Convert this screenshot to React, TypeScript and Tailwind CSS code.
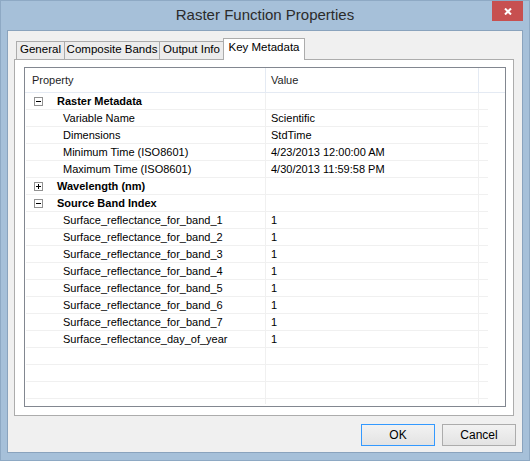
import type { ReactNode } from "react";

type Row =
  | { kind: "group"; label: string; open: boolean }
  | { kind: "item"; label: string; value: string }
  | { kind: "empty" };

const rows: Row[] = [
  { kind: "group", label: "Raster Metadata", open: true },
  { kind: "item", label: "Variable Name", value: "Scientific" },
  { kind: "item", label: "Dimensions", value: "StdTime" },
  { kind: "item", label: "Minimum Time (ISO8601)", value: "4/23/2013 12:00:00 AM" },
  { kind: "item", label: "Maximum Time (ISO8601)", value: "4/30/2013 11:59:58 PM" },
  { kind: "group", label: "Wavelength (nm)", open: false },
  { kind: "group", label: "Source Band Index", open: true },
  { kind: "item", label: "Surface_reflectance_for_band_1", value: "1" },
  { kind: "item", label: "Surface_reflectance_for_band_2", value: "1" },
  { kind: "item", label: "Surface_reflectance_for_band_3", value: "1" },
  { kind: "item", label: "Surface_reflectance_for_band_4", value: "1" },
  { kind: "item", label: "Surface_reflectance_for_band_5", value: "1" },
  { kind: "item", label: "Surface_reflectance_for_band_6", value: "1" },
  { kind: "item", label: "Surface_reflectance_for_band_7", value: "1" },
  { kind: "item", label: "Surface_reflectance_day_of_year", value: "1" },
  { kind: "empty" },
  { kind: "empty" },
  { kind: "empty" },
];

const tabs = [
  { label: "General", w: "w-[48px]" },
  { label: "Composite Bands", w: "w-[95px]" },
  { label: "Output Info", w: "w-[64px]" },
];

function Expander(props: { open: boolean }) {
  return (
    <svg width="9" height="9" viewBox="0 0 9 9" className="shrink-0">
      <rect x="0.5" y="0.5" width="8" height="8" fill="#fff" stroke="#919191" />
      <path d="M2 4.5h5" stroke="#000" />
      {!props.open ? <path d="M4.5 2v5" stroke="#000" /> : null}
    </svg>
  );
}

function GridRow(props: { children?: ReactNode; value?: string; h?: string }) {
  return (
    <div className={`flex ${props.h ?? "h-[17px] border-b border-[#f0f0f0]"}`}>
      <div className="flex w-[240px] items-center border-r border-[#f0f0f0]">
        {props.children}
      </div>
      <div className="flex w-[213px] items-center border-r border-[#f0f0f0] pl-[5px]">
        {props.value}
      </div>
      <div className="w-[9px]" />
    </div>
  );
}

function Button(props: { label: string; primary?: boolean }) {
  return (
    <button
      type="button"
      className={`flex h-[22px] w-[74px] items-center justify-center border bg-gradient-to-b from-[#f2f2f2] to-[#e3e3e3] text-[12px] text-black ${
        props.primary ? "border-[#3399ff]" : "border-[#acacac]"
      }`}
    >
      {props.label}
    </button>
  );
}

export default function App() {
  return (
    <div className="flex h-[461px] w-[530px] flex-col border border-[#8ea9c4] bg-[#a6c0d9] font-['Liberation_Sans',Arial,sans-serif]">
      {/* title bar */}
      <div className="relative flex h-[29px] shrink-0 items-center justify-center">
        <span className="text-[15px] text-[#2b2b2b]">Raster Function Properties</span>
        <div className="absolute top-0 right-[6px] flex h-[20px] w-[31px] items-center justify-center bg-[#c75050]">
          <svg width="8" height="7" viewBox="0 0 8 7">
            <path d="M1 0.5l6 6M7 0.5l-6 6" stroke="#fff" strokeWidth="2" />
          </svg>
        </div>
      </div>

      {/* dialog body */}
      <div className="mx-[6px] mb-[7px] flex flex-1 flex-col border border-[#8aa3bd] bg-[#f0f0f0] pt-[7px]">
        <div className="ml-[6px] mr-[8px] flex flex-col">
          <div className="flex h-[21px] items-end pl-[2px] text-[11.5px] whitespace-nowrap">
            {tabs.map((t) => (
              <div
                key={t.label}
                className={`flex h-[18px] ${t.w} items-center justify-center border border-b-0 border-r-0 border-[#acacac] bg-[#ececec] pb-[1px] text-black`}
              >
                {t.label}
              </div>
            ))}
            <div className="relative z-10 -mb-[1px] flex h-[22px] w-[82px] items-center justify-center border border-b-0 border-[#acacac] bg-white pb-[3px] text-black">
              Key Metadata
            </div>
          </div>

          <div className="flex h-[357px] flex-col border border-[#acacac] bg-white pt-[7px] pr-[7px] pb-[8px] pl-[9px]">
            <div className="flex h-[340px] flex-col overflow-hidden border border-[#828790] text-[11px] text-black">
              <div className="flex h-[25px] shrink-0 border-b border-[#e4eaf3]">
                <div className="flex w-[241px] items-center border-r border-[#e4eaf3] pl-[7px] text-[#1e1e1e]">
                  Property
                </div>
                <div className="flex w-[213px] items-center border-r border-[#e4eaf3] pl-[5px] text-[#1e1e1e]">
                  Value
                </div>
                <div className="flex-1" />
              </div>
              <div className="ml-[1px] flex w-[462px] flex-col">
                {rows.map((r, i) => {
                  if (r.kind === "group") {
                    return (
                      <GridRow key={i}>
                        <div className="ml-[8px]">
                          <Expander open={r.open} />
                        </div>
                        <span className="ml-[14px] font-bold">{r.label}</span>
                      </GridRow>
                    );
                  }
                  if (r.kind === "item") {
                    return (
                      <GridRow key={i} value={r.value}>
                        <span className="ml-[37px]">{r.label}</span>
                      </GridRow>
                    );
                  }
                  return <GridRow key={i} />;
                })}
                <GridRow h="h-[5px]" />
              </div>
            </div>
          </div>
        </div>

        <div className="mt-[8px] mr-[6px] flex justify-end gap-[7px]">
          <Button label="OK" primary />
          <Button label="Cancel" />
        </div>
      </div>
    </div>
  );
}
